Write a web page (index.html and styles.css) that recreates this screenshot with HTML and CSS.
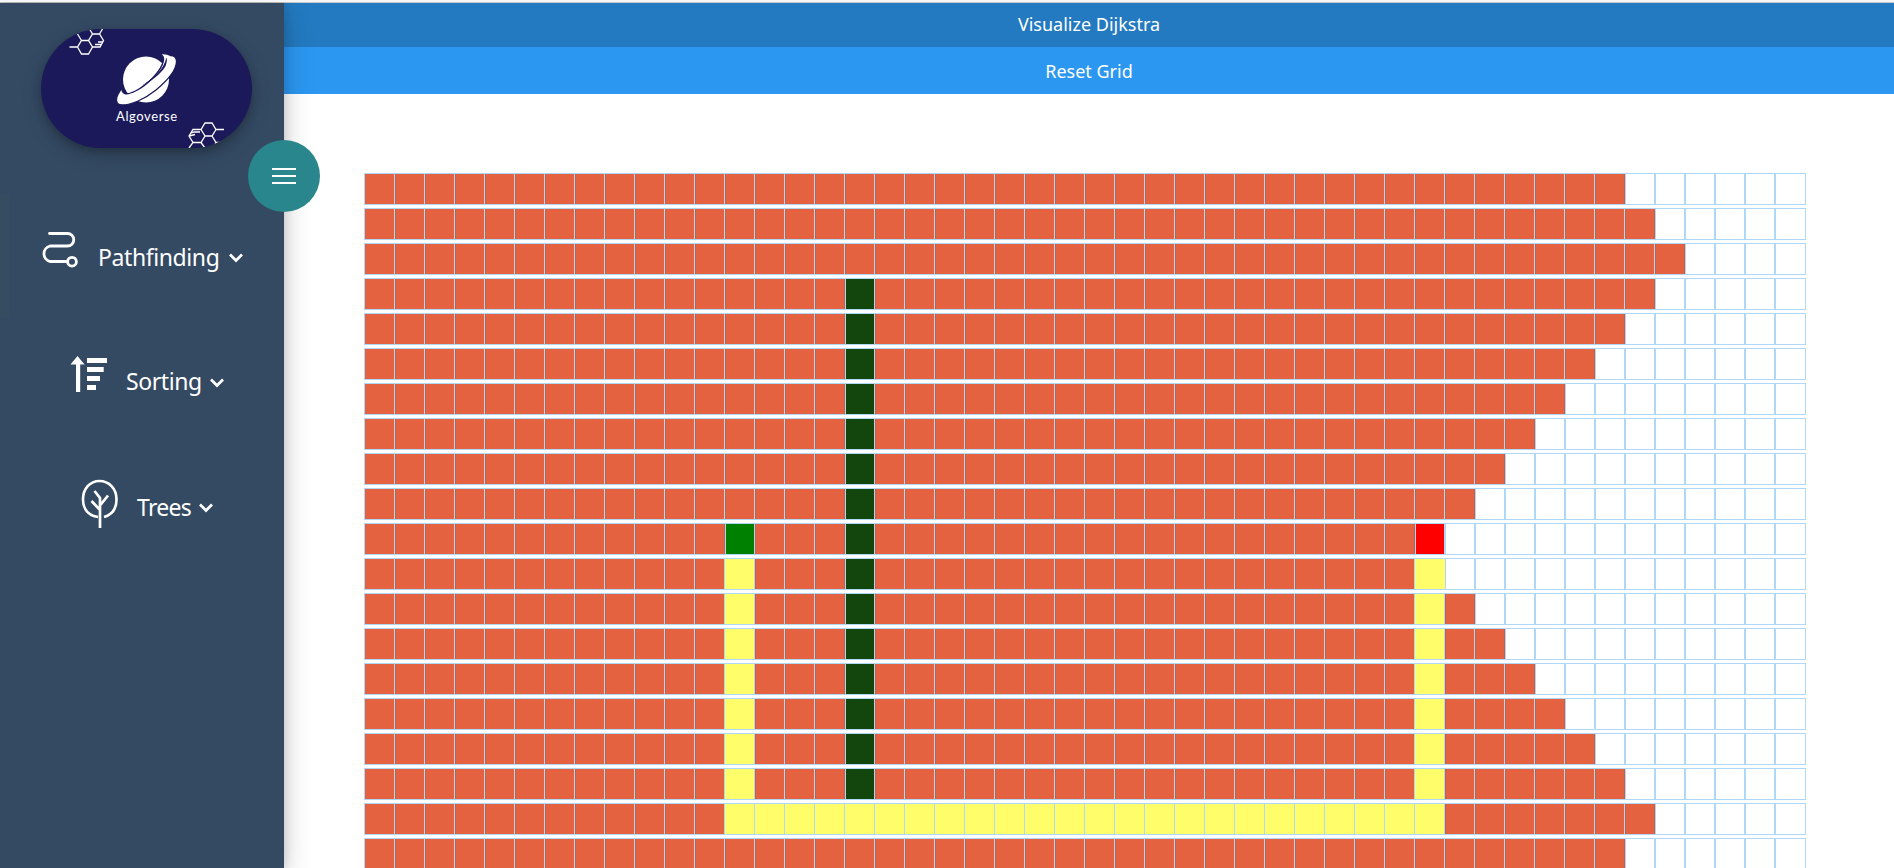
FILE: index.html
```html
<!DOCTYPE html>
<html lang="en">
<head>
<meta charset="utf-8">
<title>Algoverse</title>
<link rel="stylesheet" href="styles.css">
</head>
<body>
<div class="app">
  <aside class="sidebar">
    <div class="edge"></div>
    <div class="logo">
      <svg class="logo-art" viewBox="0 0 211 119" fill="none" stroke="#fff" stroke-width="1.3">
        <path d="M28.500 18h8l4-6.500h7l4 6.500-4 7h-7l-4-7M36.500 5l4 6.500M47.500 11.500l4-6.500h7l4 6.500-3.500 6.500h-7.500M51.500 5l-3-5M58.500 5l3-5M54 15.500h6M57 13h5"/>
        <path d="M148 119l4-5.500-4-6.500 4-6.500h8l4-6.500h7l4 6.500h8M152 113.500h8l4-6.500-4-6.500M160 113.500l4 5.500M164 107h7l4-6.500M171 107l4 6.500h5M175 113.500l-3 5.500M149 104.500l4-1.500h6M148 107l6-1.500"/>
        <g fill="#fff" stroke="none">
          <circle cx="105" cy="50.500" r="23"/>
          <path stroke="#1b1959" stroke-width="1.300" d="M81.700 58.500C75 66 72 76 81.500 76c8 0 21-5 33.500-15 12-10 20.500-20.500 20.500-28.500 0-4-3-6-6-6-3-2-7.500-2-11.500-1.500 4 1 5 3 4.500 6.500-2 10-15 24-28 30.500-9 4.500-15 3.500-12.800-3.500z"/>
          <path fill="#1b1959" d="M100.500 56.700c10-6 18-13 22-20.500 2-4 2.500-5.500 2.500-7.500 1.500 1 1 4-.5 8.500-5 8-14 15-24 19.500z"/>
        </g>
      </svg>
      <span class="logo-name">Algoverse</span>
    </div>
    <nav class="nav">
      <a class="item item-path">
        <svg class="icon" width="38" height="38" viewBox="0 0 38 38" fill="none" stroke="#fff" stroke-width="2.800" stroke-linecap="round"><path d="M8.500 2.500h18a6 6 0 0 1 0 12.500H9a8 8 0 0 0 0 15.500h17"/><circle cx="31" cy="30.700" r="4.400"/></svg>
        <span class="label label-path">Pathfinding</span>
        <svg class="chev" width="16" height="12" viewBox="0 0 16 12" fill="none" stroke="#fff" stroke-width="2.700"><path d="M2 2.500l6 6 6-6"/></svg>
      </a>
      <a class="item item-sort">
        <svg class="icon" width="38" height="38" viewBox="0 0 38 38" fill="#fff"><path d="M7.500 1l7 8.500h-4.300V37H6V9.500H.5zM17 3h20v5H17zM17 12h16.700v5H17zM17 21h13v5H17zM17 30h9v5h-9z"/></svg>
        <span class="label label-sort">Sorting</span>
        <svg class="chev" width="16" height="12" viewBox="0 0 16 12" fill="none" stroke="#fff" stroke-width="2.700"><path d="M2 2.500l6 6 6-6"/></svg>
      </a>
      <a class="item item-tree">
        <svg class="icon" width="38" height="50" viewBox="0 0 38 50" fill="none" stroke="#fff" stroke-width="2.700"><path d="M17 38C7 36.500 2 29.500 2 20.500 2 9.500 9 2 18.500 2S35.500 9.500 35.500 20.500c0 9-4 15-12.500 17.500M19 49V19l-5.500-7M19 26.500l8-10M19 31l-8.500-9"/></svg>
        <span class="label label-tree">Trees</span>
        <svg class="chev" width="16" height="12" viewBox="0 0 16 12" fill="none" stroke="#fff" stroke-width="2.700"><path d="M2 2.500l6 6 6-6"/></svg>
      </a>
    </nav>
    <button class="toggle" aria-label="Menu"><i></i><i></i><i></i></button>
  </aside>
  <main class="main">
    <button class="bar bar-run">Visualize Dijkstra</button>
    <button class="bar bar-reset">Reset Grid</button>
    <div class="grid" id="grid"></div>
  </main>
</div>
<script src="grid.js"></script>
</body>
</html>
```
FILE: styles.css
```css
* { box-sizing: border-box; }
body { margin: 0; height: 868px; overflow: hidden; background: #fff; font-family: "Noto Sans", sans-serif; }
.app { display: flex; height: 868px; border-top: 2px solid #f6f6f6; box-shadow: inset 0 1px 0 #c9c9c9; padding-top: 1px; overflow: hidden; }
.sidebar { position: relative; z-index: 2; width: 284px; flex: none; padding: 26px 0 0 41px; background: #344a63; box-shadow: 0 8px 28px rgba(0,0,0,.2), 0 0 10px rgba(0,0,0,.15); }
.edge { position: absolute; left: 0; top: 191px; width: 9px; height: 123px; background: #364d61; }
.logo { position: relative; width: 211px; height: 119px; border-radius: 60px; background: #1b1959; box-shadow: 0 4px 8px rgba(0,0,0,.2), 0 6px 20px rgba(0,0,0,.19); }
.logo-art { display: block; width: 211px; height: 119px; border-radius: 60px; }
.logo-name { position: absolute; left: 75px; top: 77px; font: 13px/20px Lato, sans-serif; letter-spacing: .6px; color: #fff; white-space: nowrap; }
.nav { padding-top: 83px; }
.item { display: flex; height: 125px; color: #fff; }
.item-path { margin-left: 0; }
.item-sort { margin-left: 29px; }
.item-tree { margin-left: 40px; height: 60px; }
.icon { flex: none; display: block; }
.item-sort .icon { margin-top: -1px; }
.item-tree .icon { margin-top: -2px; }
.label { margin-left: 18px; font-size: 23px; line-height: 32px; padding-top: 9px; white-space: nowrap; flex: none; }
.label-path { margin-left: 19px; width: 130px; padding-top: 10px; letter-spacing: -.4px; }
.label-sort { width: 83px; letter-spacing: -.4px; }
.label-tree { width: 61px; padding-top: 10px; letter-spacing: -.7px; }
.chev { flex: none; margin-top: 21px; }
.toggle { position: absolute; left: 248px; top: 137px; width: 72px; height: 72px; padding: 0; border: 0; border-radius: 50%; background: #2a868d; display: flex; flex-direction: column; align-items: center; justify-content: center; gap: 5px; }
.toggle i { width: 24px; height: 2px; background: #fff; }
.main { flex: 1; }
.bar { display: block; width: 100%; height: 44px; padding: 0 0 2px; border: 0; background: #237ac0; color: #fff; font: 18px/24px "Noto Sans", sans-serif; }
.bar-reset { height: 47px; padding: 1px 0 0; background: #2b97f0; }
.grid { padding: 80px 0 0 81px; }
.row { display: flex; height: 30px; margin-bottom: 5px; }
.cell { width: 30px; height: 30px; flex: none; outline: 1px solid #afd8f8; }
.visited { position: relative; background: #e46240; box-shadow: inset 1px 0 #c65f48, inset -1px 0 #c65f48; }
.visited:first-child { box-shadow: none; }
.path { position: relative; background: #fffe6a; }
.wall { background: #12460d; }
.start { background: #008000; }
.end { background: #f00; }
```
FILE: grid.js
```javascript
const reach = [42, 43, 44, 43, 42, 41, 40, 39, 38, 37, 36, 36, 37, 38, 39, 40, 41, 42, 43, 42];
function kind(r, c) {
  if (r === 10 && c === 12) return 'start';
  if (r === 10 && c === 35) return 'end';
  if (c === 16 && r >= 3 && r <= 17) return 'wall';
  if (r > 10 && r < 18 && (c === 12 || c === 35)) return 'path';
  if (r === 18 && c >= 12 && c <= 35) return 'path';
  return c < reach[r] ? 'visited' : '';
}
const grid = document.getElementById('grid');
reach.forEach((_, r) => {
  const row = document.createElement('div');
  row.className = 'row';
  for (let c = 0; c < 48; c++) {
    const cell = document.createElement('div');
    cell.className = ('cell ' + kind(r, c)).trim();
    row.appendChild(cell);
  }
  grid.appendChild(row);
});
```
